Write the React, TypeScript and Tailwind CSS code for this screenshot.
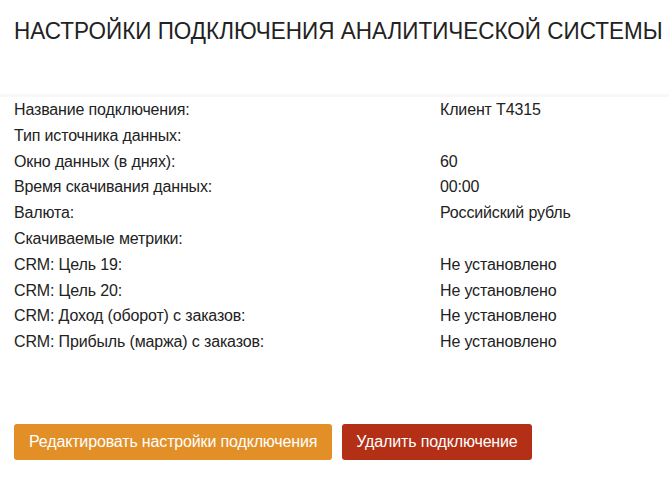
const rows: [string, string][] = [
  ["Название подключения:", "Клиент Т4315"],
  ["Тип источника данных:", ""],
  ["Окно данных (в днях):", "60"],
  ["Время скачивания данных:", "00:00"],
  ["Валюта:", "Российский рубль"],
  ["Скачиваемые метрики:", ""],
  ["CRM: Цель 19:", "Не установлено"],
  ["CRM: Цель 20:", "Не установлено"],
  ["CRM: Доход (оборот) с заказов:", "Не установлено"],
  ["CRM: Прибыль (маржа) с заказов:", "Не установлено"],
];

export default function App() {
  return (
    <div className="min-h-screen overflow-hidden bg-white font-['Liberation_Sans',Arial,sans-serif] text-[#222] tracking-[-0.15px]">
      <h1 className="px-[14px] pt-[16px] text-[24px] font-normal leading-[30px] tracking-normal whitespace-nowrap">
        <span className="inline-block origin-left scale-x-[0.937]">
          НАСТРОЙКИ ПОДКЛЮЧЕНИЯ АНАЛИТИЧЕСКОЙ СИСТЕМЫ
        </span>
      </h1>

      <div className="mt-[48px] border-t-[3px] border-[#f8f8f8] px-[14px]">
        <div className="grid grid-cols-[426px_1fr] text-[16px] leading-[25.8px]">
          {rows.map(([label, value]) => (
            <div key={label} className="contents">
              <div>{label}</div>
              <div>{value}</div>
            </div>
          ))}
        </div>

        <div className="mt-[69px] flex gap-[10px]">
          <button className="h-[36px] rounded-[3px] bg-[#e28f28] px-[15px] text-[16px] text-white">
            Редактировать настройки подключения
          </button>
          <button className="h-[36px] rounded-[3px] bg-[#b32f15] px-[14px] text-[16px] text-white">
            Удалить подключение
          </button>
        </div>
      </div>
    </div>
  );
}
